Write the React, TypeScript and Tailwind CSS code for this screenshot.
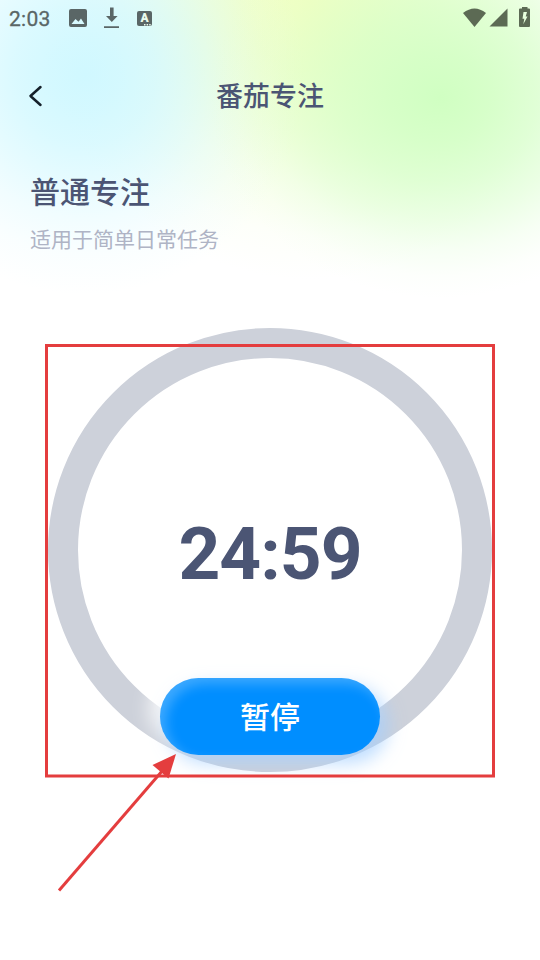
function StatusBar() {
  return (
    <div className="flex h-9 items-center justify-between pr-[9px] pl-[9px] text-[#5a6666]">
      <div className="flex h-9 items-center">
        <span className="w-[60px] pt-[3px] font-['Roboto',sans-serif] text-[21px] leading-none tracking-[0.3px] [-webkit-text-stroke:0.3px_currentColor]">2:03</span>
        <svg className="w-[18px] shrink-0" height="18" viewBox="0 0 18 18">
          <path fillRule="evenodd" fill="currentColor" d="M2 0h14a2 2 0 0 1 2 2v14a2 2 0 0 1-2 2H2a2 2 0 0 1-2-2V2a2 2 0 0 1 2-2ZM2.500 15h13L12 9.500 9.500 12.800 6.500 10Z" />
        </svg>
        <svg className="ml-4 w-[17px] shrink-0" height="22" viewBox="0 0 17 22">
          <path fill="currentColor" d="M7 .5h3.600v8.500h4L8.800 15 3 9h4ZM1 19.200h15V21H1Z" />
        </svg>
        <span className="relative ml-[17px] flex size-[15px] items-center justify-center rounded-[2px] bg-[#5a6666] font-['Roboto',sans-serif] text-[12px] leading-none font-black text-[#eafbed]">
          A
          <svg className="absolute right-px bottom-0" width="7" height="2" viewBox="0 0 7 2">
            <path fill="currentColor" d="M0 0h1.5v1.5H0zM2.6 0h1.5v1.5H2.6zM5.2 0h1.5v1.5H5.2z" />
          </svg>
        </span>
      </div>
      <div className="flex h-9 items-center text-[#5c6a54]">
        <svg className="-mt-px" width="23" height="19" viewBox="0 0 23 19">
          <path fill="currentColor" d="M0 5Q11.500-4 23 5L11.500 19Z" />
        </svg>
        <svg className="ml-[3px] -mt-px" width="19" height="19" viewBox="0 0 19 19">
          <path fill="currentColor" d="M18.500.5v18H.5Z" />
        </svg>
        <svg className="ml-[11px] -mt-[2px]" width="12" height="20" viewBox="0 0 12 20">
          <path fillRule="evenodd" fill="currentColor" d="M3 0h5.500v1.500h1.500q1 0 1 1v16.500q0 1-1 1H1q-1 0-1-1V2.500q0-1 1-1h2ZM4.500 5 3.500 11.700h1.800L4.300 17.300 8.500 9.500H6.700L8 5Z" />
        </svg>
      </div>
    </div>
  );
}

function TimerRing() {
  return (
    <div className="relative mx-auto mt-[73px] flex size-[444px] flex-col items-center rounded-full border-[30px] border-[#cdd1da]">
      <time className="mt-[153px] font-['Roboto',sans-serif] text-[73px] leading-[86px] font-bold tracking-[-1px] text-[#4b5574]">24:59</time>
      <button className="mt-[81px] h-[77px] w-[220px] shrink-0 rounded-full bg-[#008eff] pb-[4px] font-['Noto_Sans_CJK_SC',sans-serif] text-[30px] leading-none font-medium text-white shadow-[8px_8px_18px_rgba(160,205,255,0.7),-10px_-8px_20px_rgba(255,255,255,0.9),inset_6px_6px_12px_rgba(255,255,255,0.24)]">
        暂停
      </button>
    </div>
  );
}

export default function App() {
  return (
    <main className="relative h-[960px] w-[540px] overflow-hidden bg-white bg-[radial-gradient(ellipse_230px_200px_at_440px_98px,#d0ffc2_0%,#d2ffc4e0_22%,#d4ffc6b4_42%,#d6ffc878_60%,#dbffd03c_76%,#e2ffd814_89%,#ebffe300_100%),radial-gradient(circle_at_85px_75px,#d0f8ff_0px,#d0f8ffe8_35px,#d0f8ffc4_70px,#d0f8ff8c_105px,#d0f8ff4c_142px,#d0f8ff1c_180px,#d0f8ff00_220px),radial-gradient(ellipse_270px_280px_at_310px_0px,#f2ffbf_0%,#f0ffc0d8_25%,#eeffc4a0_46%,#efffce5c_66%,#f2ffda24_84%,#ffffff00_100%)] font-['Noto_Sans_CJK_SC',sans-serif]">
      <StatusBar />
      <header className="grid h-[118px] grid-cols-[1fr_auto_1fr] items-center pl-7 text-[#4b5574]">
        <svg className="mt-px" width="15" height="22" viewBox="0 0 15 22">
          <path fill="none" stroke="#15202a" strokeWidth="2.500" strokeLinecap="round" strokeLinejoin="round" d="M12.500 2 2.500 11l10 9" />
        </svg>
        <h1 className="-mt-[2px] -ml-7 text-[27px] leading-none font-medium">番茄专注</h1>
      </header>
      <section className="pl-[30px]">
        <h2 className="mt-[14px] text-[30px] leading-[44px] font-medium text-[#4b5574]">普通专注</h2>
        <p className="mt-[11px] mb-[74px] text-[21px] leading-[31px] text-[#afb4c5]">适用于简单日常任务</p>
      </section>
      <TimerRing />
      <svg className="pointer-events-none absolute inset-0" width="540" height="960" viewBox="0 0 540 960">
        <g fill="none" stroke="#e43d3e" strokeWidth="3">
          <path d="M46.500 345.500h447v430.500h-447Z" />
          <path d="M59 890.500 163 770" />
        </g>
        <path fill="#e43d3e" d="m176 754-23.500 11 16 13.500Z" />
      </svg>
    </main>
  );
}
